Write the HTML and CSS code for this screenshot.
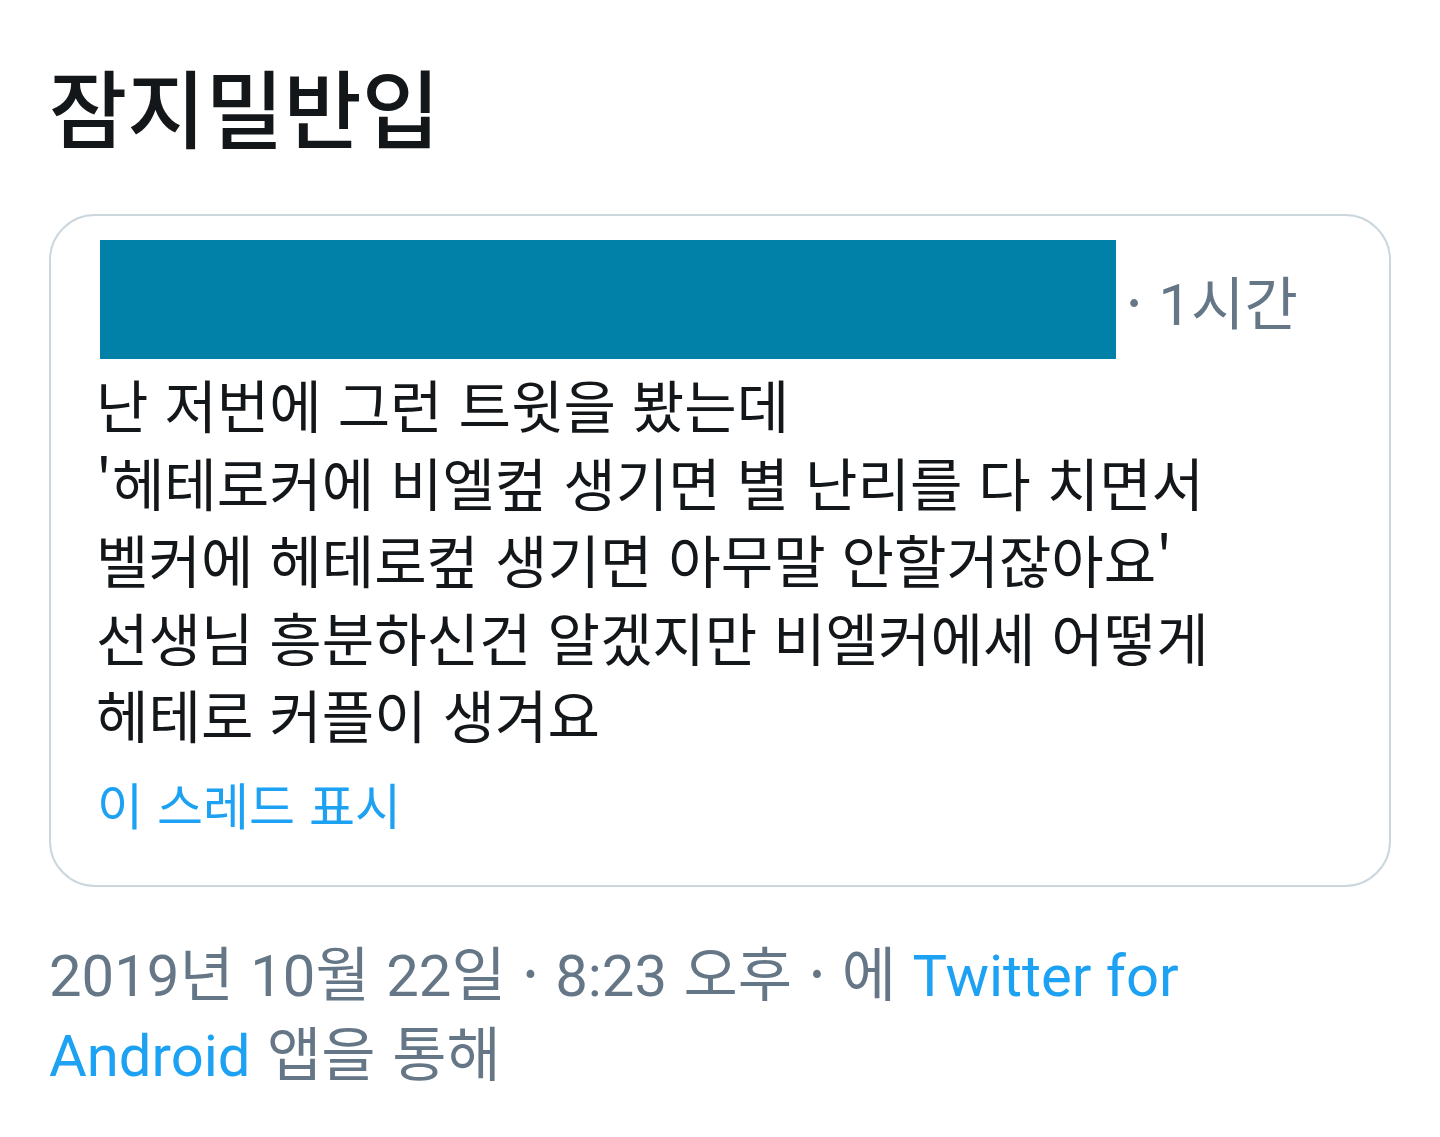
FILE: index.html
```html
<!DOCTYPE html>
<html lang="ko">
<head>
<meta charset="utf-8">
<link rel="stylesheet" href="styles.css">
</head>
<body>
<div class="page">
  <h1 class="title">잠지밀반입</h1>
  <div class="card">
    <div class="head">
      <div class="redact"></div>
      <span class="time">· <span class="lat">1</span>시간</span>
    </div>
    <div class="text">
      <p>난 저번에 그런 트윗을 봤는데</p>
      <p>'헤테로커에 비엘컾 생기면 별 난리를 다 치면서</p>
      <p>벨커에 헤테로컾 생기면 아무말 안할거잖아요'</p>
      <p>선생님 흥분하신건 알겠지만 비엘커에세 어떻게</p>
      <p>헤테로 커플이 생겨요</p>
    </div>
    <div class="thread">이 스레드 표시</div>
  </div>
  <div class="meta">
    <p><span class="lat">2019</span>년 <span class="lat">10</span>월 <span class="lat">22</span>일 · <span class="lat">8:23</span> 오후 · 에 <span class="link lat">Twitter for</span></p>
    <p><span class="link lat">Android</span> 앱을 통해</p>
  </div>
</div>
</body>
</html>
```
FILE: styles.css
```css
html, body {
  margin: 0;
  padding: 0;
  background: #ffffff;
}
body {
  font-family: "Noto Sans CJK KR", "Noto Sans", sans-serif;
  color: #14171a;
}
.page {
  padding: 50px 49px 0 49px;
}
.title {
  margin: 0;
  font-size: 85px;
  font-weight: 500;
  line-height: 110px;
  color: #14171a;
}
.card {
  margin-top: 54px;
  border: 2px solid #ccd6dd;
  border-radius: 46px;
  padding: 24px 50px 40px 49px;
  height: 605px;
}
.head {
  display: flex;
  align-items: center;
  gap: 10px;
}
.redact {
  width: 1016px;
  height: 119px;
  background: #0180a8;
}
.time {
  font-size: 58px;
  color: #657786;
  line-height: 1;
  padding-top: 6px;
}
.text {
  margin-top: 6px;
  margin-left: -4px;
  font-size: 57px;
  line-height: 77.5px;
}
.text p {
  margin: 0;
}
.thread {
  margin-top: 10px;
  margin-left: -3px;
  font-size: 50px;
  line-height: 80px;
  color: #1da1f2;
}
.meta {
  margin-top: 44px;
  font-size: 59px;
  line-height: 80px;
  color: #657786;
}
.meta p {
  margin: 0;
}
.lat {
  font-family: Roboto, "Noto Sans", sans-serif;
  font-size: 58px;
  line-height: 1;
}
.link {
  color: #1da1f2;
}
```
